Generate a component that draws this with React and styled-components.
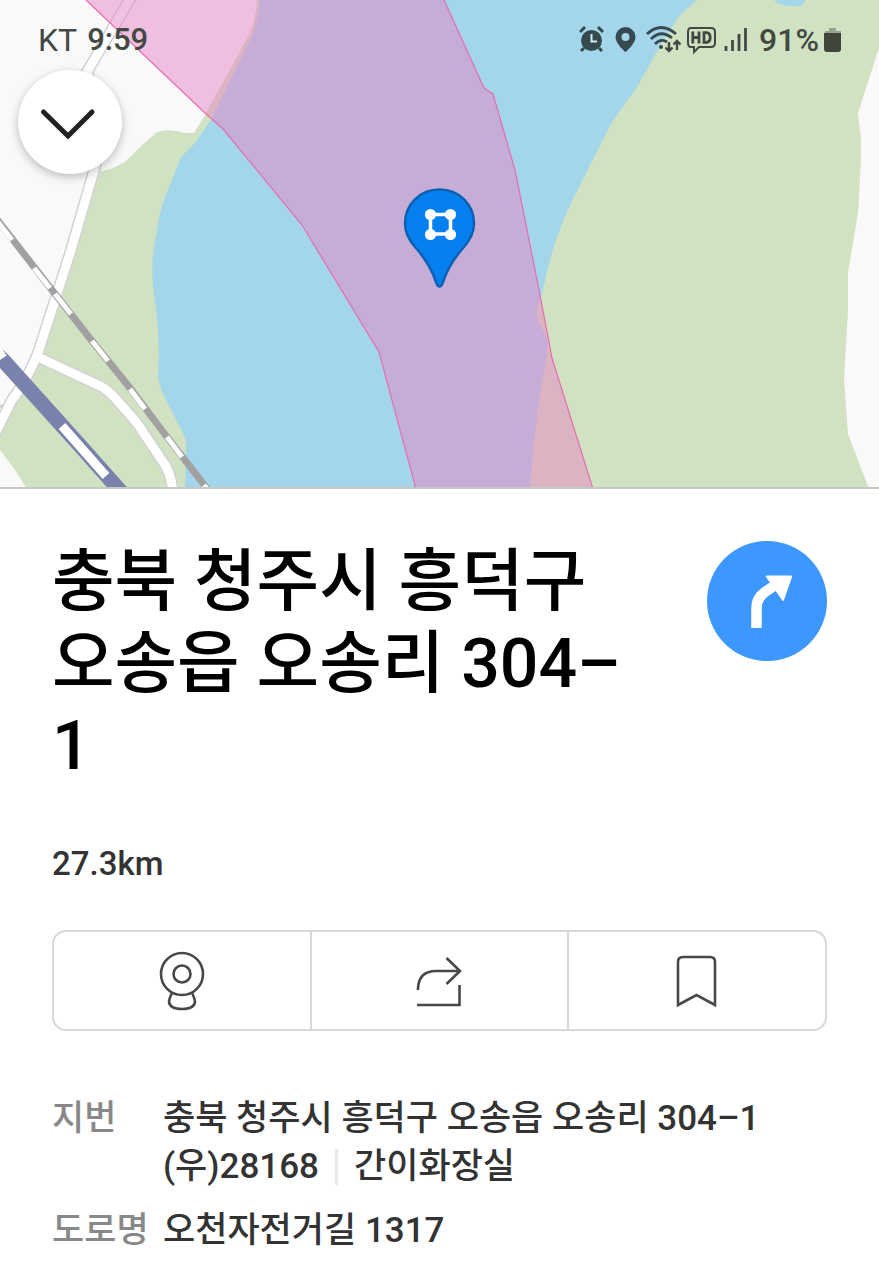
import React from "react";
import styled, { createGlobalStyle } from "styled-components";

const GlobalStyle = createGlobalStyle`
  * { box-sizing: border-box; }
  body {
    margin: 0;
    background: #fff;
    font-family: Roboto, "Noto Sans CJK KR", sans-serif;
    color: #333;
  }
`;

const Screen = styled.div`
  display: flex;
  flex-direction: column;
`;

const MapArea = styled.section`
  position: relative;
  height: 489px;
  overflow: hidden;
  background: #f9f9f9;
  border-bottom: 2px solid #c3c9c3;
`;

const MapCanvas = styled.svg`
  display: block;
  width: 100%;
  height: 100%;
`;

const MapOverlay = styled.div`
  position: absolute;
  inset: 0;
  padding: 20px 36px 0 38px;
`;

const StatusBar = styled.header`
  display: flex;
  justify-content: space-between;
  align-items: center;
  height: 40px;
  font-size: 32px;
  line-height: 40px;
  color: #424943;
`;

const StatusGroup = styled.div`
  display: flex;
  align-items: center;
  gap: ${(p) => p.$gap}px;
`;

const Clock = styled.time`
  font-size: 31px;
  font-weight: 500;
`;

const Battery = styled.span`
  font-size: 32px;
  font-weight: 500;
`;

const BackButton = styled.button`
  display: grid;
  place-items: center;
  width: 104px;
  height: 104px;
  margin: 10px 0 0 -20px;
  padding: 0;
  border: 0;
  border-radius: 50%;
  background: #fff;
  box-shadow: 0 3px 10px rgba(0, 0, 0, 0.25);
`;

const Sheet = styled.main`
  padding: 52px 52px 24px;
`;

const Heading = styled.div`
  display: flex;
  justify-content: space-between;
  align-items: flex-start;
  gap: 80px;
`;

const Title = styled.h1`
  flex: 1;
  min-width: 0;
  margin: 0;
  font-size: 68px;
  line-height: 82px;
  font-weight: 500;
  color: #000;
  word-break: keep-all;
`;

const RouteButton = styled.button`
  flex: none;
  width: 120px;
  height: 120px;
  padding: 0;
  border: 0;
  border-radius: 50%;
  background: #3c98ff;
`;

const Distance = styled.p`
  margin: 57px 0 0;
  font-size: 33px;
  line-height: 40px;
  font-weight: 500;
`;

const Actions = styled.div`
  display: grid;
  grid-template-columns: repeat(3, 1fr);
  gap: 2px;
  height: 101px;
  margin-top: 46px;
  overflow: hidden;
  border: 2px solid #d8d8d8;
  border-radius: 14px;
  background: #d8d8d8;
`;

const Action = styled.button`
  display: grid;
  place-items: center;
  padding: 0;
  border: 0;
  background: #fff;
`;

const Details = styled.dl`
  display: grid;
  grid-template-columns: 111px 1fr;
  row-gap: 16px;
  margin: 64px 0 0;
  font-size: 35px;
  line-height: 48px;
  font-weight: 500;
`;

const Label = styled.dt`
  color: #888;
  white-space: nowrap;
`;

const Value = styled.dd`
  margin: 0;
`;

const PostalLine = styled.div`
  display: flex;
  align-items: center;
`;

const Divider = styled.span`
  width: 3px;
  height: 36px;
  margin: 0 16px;
  background: #e8e8e8;
`;

const rail = ["M-2 222 12 240", "M34 268 50 288", "M55 294 71 314", "M92 341 108 361", "M130 389 145 409", "M167 437 182 457", "M204 485 214 498"];
const roads = [
  "M133-6 87 72Q108 120 95 167L71 250 38 353Q26 382 12 400L-6 436",
  "M38 357 98 385Q106 388 116 399L137 423 163 462Q172 474 173 495",
];

function RiverMap() {
  return (
    <MapCanvas viewBox="0 0 879 487" preserveAspectRatio="xMidYMin slice" role="img" aria-label="지도">
      <rect width="879" height="489" fill="#f9f9f9" />
      <path fill="#d0e2c1" d="M100 172 113 168 125 162 140 147 157 132Q170 128 185 133L194 133 205 115 249 35Q256 20 257 0H300V489H27L15 470 0 450V412L38 357Z" />
      <path fill="#a3d6eb" d="M260 0Q258 20 252 36L212 118 195 143 181 157 170 185Q162 203 159 218L154 248Q151 265 153 285L157 318Q160 345 158 378L162 392 180 427Q188 440 186 455L185 489H600V0Z" />
      <path fill="#a3d6eb" d="M440 0H720V220H440Z" />
      <path fill="#d0e2c1" d="M697 0 680 15 660 46 637 87 612 122 590 165 570 205Q550 250 543 290L537 308Q536 320 543 330 550 340 546 360L541 385 534 440 530 489H869L848 434 844 380 848 310V272L858 213 861 160V140L858 113 879 48V0Z" />
      <path fill="#a3d6eb" d="M774 0Q780 6 790 6H800Q804 5 805 0Z" />
      <g fill="none">
        {roads.map((d) => <path key={d} d={d} stroke="#d2d2d2" strokeWidth="12" />)}
        <path d="M-4 408 5 405 12 394" stroke="#d2d2d2" strokeWidth="3" />
        {roads.map((d) => <path key={d + "w"} d={d} stroke="#fff" strokeWidth="9" />)}
        <path d="M-4 218 52 290 92 341 130 388 167 437 216 500" stroke="#a1a1a1" strokeWidth="7" />
        {rail.map((d) => <path key={d} d={d} stroke="#fff" strokeWidth="5" />)}
        <path d="M-8 350 3 360 83 449 130 502" stroke="#7882ac" strokeWidth="15" />
        <path d="M-4 348 3 358M62 426 106 476" stroke="#fff" strokeWidth="9" />
      </g>
      <path fill="#e883c4" fillOpacity=".5" d="M86 0 205 113 223 129 302 225 379 352 416 489H593L552 358 540 295 515 170 493 94 484 88 444 0Z" />
      <path fill="none" stroke="#e66db0" strokeWidth="1.2" d="M86 0 205 113 223 129 302 225 379 352 416 489M593 489 552 358 540 295 515 170 493 94 484 88 444 0" />
      <path fill="#0580ee" stroke="#0c60b2" strokeWidth="2.5" strokeLinejoin="round" d="M439.500 189.500C420 189.500 405 204.500 405 223.500C405 233 409 240 415 247C424 257 431 267 436 282Q437.500 287 439.500 286.500Q441.500 287 443 282C448 267 455 257 464 247C470 240 474 233 474 223.500C474 204.500 459 189.500 439.500 189.500Z" />
      <g fill="#fff" stroke="#fff">
        <path fill="none" strokeWidth="3.500" d="M430.500 214.500H450.500V234H430.500Z" />
        {[[430.5, 214.5], [450.5, 214.5], [430.5, 234.5], [450.5, 234.5]].map(([x, y]) => (
          <circle key={`${x}-${y}`} cx={x} cy={y} r="5.6" stroke="none" />
        ))}
      </g>
    </MapCanvas>
  );
}

function StatusIcons() {
  return (
    <svg width="172" height="32" viewBox="0 0 172 32" aria-hidden="true" fill="none" stroke="#36494e" strokeWidth="2.4">
      <g>
        <circle cx="12.500" cy="16.500" r="10.500" fill="#36494e" stroke="none" />
        <path d="M1 8 6 3M19 3 24 8M5 24 2 27M20 24 23 27" strokeWidth="3" />
        <path d="M12.500 10V17.500H18" stroke="#d7ebf2" strokeWidth="2" />
      </g>
      <path fill="#36494e" stroke="none" fillRule="evenodd" d="M46.500 3A10 10 0 0 0 36.500 13C36.500 20 46.500 28 46.500 28S56.500 20 56.500 13A10 10 0 0 0 46.500 3ZM46.500 9A4 4 0 1 1 46.500 17A4 4 0 1 1 46.500 9Z" />
      <g>
        <path d="M68 10Q82-3 97 10M72 15Q82 5 93 14M76 20Q82 14 88 18" strokeWidth="2.800" />
        <circle cx="82" cy="23" r="2" fill="#36494e" stroke="none" />
        <path d="M90 18V27M86.500 23.500 90 27 93.500 23.500M98 26V17M94.500 20.500 98 17 101.500 20.500" stroke="#424943" />
      </g>
      <g stroke="#424943">
        <path strokeWidth="2" d="M112 4H132Q136 4 136 8V19Q136 23 132 23H120L115 28V23H112Q109 23 109 19V8Q109 4 112 4Z" />
        <path strokeWidth="2.800" d="M113.800 7.500V19.500M113.800 13.500H120M120 7.500V19.500M125 8.700V18.300H127.500Q131.200 18 131.200 13.500Q131.200 9 127.500 8.700Z" />
        <path strokeWidth="2.800" d="M147 22V27M153.500 16V27M160 10V27M166.500 4V27" />
      </g>
    </svg>
  );
}

export default function App() {
  return (
    <Screen>
      <GlobalStyle />
      <MapArea>
        <RiverMap />
        <MapOverlay>
          <StatusBar>
            <StatusGroup $gap={10}>
              <span>KT</span>
              <Clock>9:59</Clock>
            </StatusGroup>
            <StatusGroup $gap={8}>
              <StatusIcons />
              <StatusGroup $gap={4}>
                <Battery>91%</Battery>
                <svg width="20" height="28" viewBox="0 0 20 28" aria-hidden="true">
                  <path fill="#96a58f" d="M6 2H13V5H18V9H2V5H6Z" />
                  <path fill="#3f4538" d="M1 7H18V23Q18 26 15 26H4Q1 26 1 23Z" />
                </svg>
              </StatusGroup>
            </StatusGroup>
          </StatusBar>
          <BackButton type="button" aria-label="닫기">
            <svg width="104" height="104" viewBox="0 0 104 104" fill="none" stroke="#222" strokeWidth="5" strokeLinecap="round">
              <path d="M25.500 42 50 66 74 42" />
            </svg>
          </BackButton>
        </MapOverlay>
      </MapArea>
      <Sheet>
        <Heading>
          <Title>충북 청주시 흥덕구 오송읍 오송리 304–1</Title>
          <RouteButton type="button" aria-label="길찾기">
            <svg width="120" height="120" viewBox="0 0 120 120">
              <path d="M49.500 87V67Q49.500 57 58 51L70 43" fill="none" stroke="#fff" strokeWidth="10.500" />
              <path d="M60 34.500H84Q85.500 34.500 85 36L77 59Q76 61 75 59L59 36Q58 34.500 60 34.500Z" fill="#fff" />
            </svg>
          </RouteButton>
        </Heading>
        <Distance>27.3km</Distance>
        <Actions>
          <Action type="button" aria-label="로드뷰">
            <svg width="60" height="70" viewBox="0 0 60 70" fill="none" stroke="#484848" strokeWidth="2.600">
              <circle cx="30" cy="28" r="21" />
              <circle cx="30" cy="28" r="8.500" />
              <path d="M20 47Q17 53 17 56Q18 63 30 63T43 56Q43 53 40 47" />
            </svg>
          </Action>
          <Action type="button" aria-label="공유">
            <svg width="60" height="70" viewBox="0 0 60 70" fill="none" stroke="#484848" strokeWidth="2.600">
              <path d="M9 44V42Q10 25 27 25H50M37.500 12 51 25 37.500 38M8 59H50.500V39" />
            </svg>
          </Action>
          <Action type="button" aria-label="저장">
            <svg width="60" height="70" viewBox="0 0 60 70" fill="none" stroke="#484848" strokeWidth="2.600">
              <path d="M11 59V16Q11 11 16 11H43Q48 11 48 16V59L29.500 49Z" />
            </svg>
          </Action>
        </Actions>
        <Details>
          <Label>지번</Label>
          <Value>
            <div>충북 청주시 흥덕구 오송읍 오송리 304–1</div>
            <PostalLine>
              <span>(우)28168</span>
              <Divider />
              <span>간이화장실</span>
            </PostalLine>
          </Value>
          <Label>도로명</Label>
          <Value>오천자전거길 1317</Value>
        </Details>
      </Sheet>
    </Screen>
  );
}
